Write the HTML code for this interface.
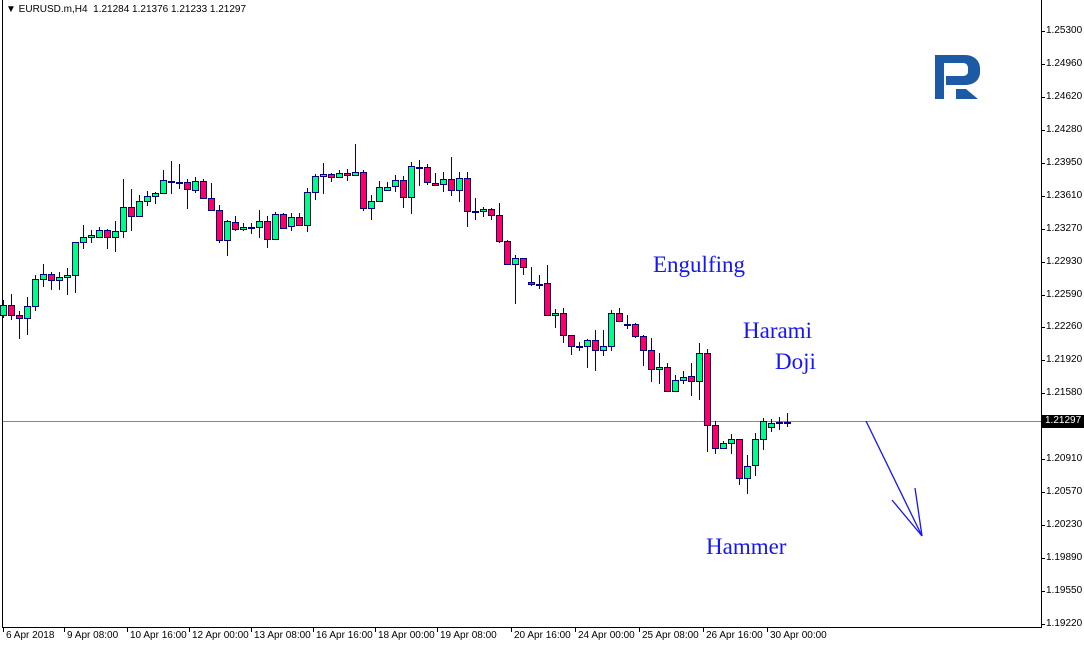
<!DOCTYPE html>
<html><head><meta charset="utf-8"><style>
html,body{margin:0;padding:0;background:#fff;}
body{width:1084px;height:648px;position:relative;overflow:hidden;font-family:"Liberation Sans",sans-serif;}
.t{position:absolute;font-size:10px;color:#000;white-space:nowrap;line-height:12px;}
.a{position:absolute;font-family:"Liberation Serif",serif;font-size:23px;color:#1414ff;white-space:nowrap;line-height:26px;}
</style></head><body>
<svg id="s" width="1084" height="648" style="position:absolute;left:0;top:0" shape-rendering="crispEdges">
<line x1="2.5" y1="0" x2="2.5" y2="627" stroke="#000"/>
<line x1="1041.5" y1="0" x2="1041.5" y2="627" stroke="#000"/>
<line x1="2" y1="627.5" x2="1042" y2="627.5" stroke="#000"/>
<line x1="3" y1="421.5" x2="1041" y2="421.5" stroke="#888"/>
<g id="c"></g>
<g id="ticks"></g>
<path d="M935 99V55h30c9 0 15 6 15 13v4c0 8-6 13-15 13h-19v-9h17c3 0 5-2 5-4v-4c0-3-2-5-5-5h-19v36z M956 89h10l12 10h-22z" fill="#1d5aa6" shape-rendering="auto"/>
<g stroke="#1414ff" stroke-width="1.3" fill="none" shape-rendering="auto">
<line x1="866" y1="421" x2="922" y2="536"/>
<line x1="922" y1="536" x2="892" y2="500"/>
<line x1="922" y1="536" x2="915" y2="488"/>
</g>
<rect x="1042" y="415" width="42" height="13" fill="#000"/>
</svg>
<div class="t" style="left:6px;top:4px;">&#9660; EURUSD.m,H4&nbsp; 1.21284 1.21376 1.21233 1.21297</div>
<div class="t" style="left:1045px;top:415px;color:#fff;">1.21297</div>
<div id="lbl"></div>
<div class="a" style="left:653px;top:252px;">Engulfing</div>
<div class="a" style="left:743px;top:318px;">Harami</div>
<div class="a" style="left:775px;top:349px;">Doji</div>
<div class="a" style="left:706px;top:534px;">Hammer</div>
<script>
var d=[[3,305,315,300,318],[11,315,305,294,320],[19,318,315,311,339],[27,306,318,297,335],[35,279,306,275,311],[43,274,279,264,287],[51,280,274,272,290],[59,277,280,272,290],[67,275,277,268,295],[75,242,275,242,293],[83,237,242,225,249],[91,235,237,230,243],[99,230,237,227,238],[107,237,230,229,249],[115,231,237,221,252],[123,207,231,179,238],[131,216,207,189,231],[139,201,216,195,216],[147,196,201,191,206],[155,193,196,192,204],[163,180,193,170,194],[171,181,181,161,194],[179,182,182,164,189],[187,189,182,179,209],[195,181,190,177,193],[203,198,181,179,199],[211,210,198,183,211],[219,240,210,205,243],[227,221,240,220,256],[235,229,222,216,231],[243,227,229,223,231],[251,227,227,223,234],[259,221,227,210,238],[267,239,221,216,248],[275,214,239,212,239],[283,228,214,213,228],[291,217,226,213,231],[299,225,217,213,225],[307,192,225,188,232],[315,176,192,174,200],[323,174,176,163,194],[331,177,174,173,182],[339,173,177,170,178],[347,175,173,169,181],[355,172,175,144,175],[363,208,172,170,211],[371,201,208,195,220],[379,187,201,181,202],[387,187,190,182,190],[395,180,186,175,192],[403,197,180,176,208],[411,166,197,162,214],[419,167,167,160,186],[427,182,167,164,185],[435,185,183,173,186],[443,179,184,172,192],[451,190,179,157,196],[459,178,190,172,202],[467,211,178,172,227],[475,211,211,198,220],[483,209,211,207,217],[491,215,209,208,220],[499,241,215,203,243],[507,264,241,240,265],[515,258,264,255,304],[523,267,258,258,275],[531,284,282,267,286],[539,284,284,275,289],[547,315,283,265,316],[555,313,315,309,328],[563,335,313,308,343],[571,346,335,335,355],[579,346,346,342,351],[587,340,346,339,368],[595,350,340,330,371],[603,346,350,330,356],[611,313,346,310,351],[619,321,313,308,322],[627,324,324,315,329],[635,336,324,323,338],[643,350,336,335,366],[651,369,350,338,382],[659,367,369,353,384],[667,391,367,363,392],[675,380,391,375,392],[683,377,380,371,384],[691,381,376,363,396],[699,353,381,343,400],[707,425,353,349,452],[715,448,425,421,454],[723,443,448,441,449],[731,439,443,434,454],[739,478,439,439,485],[747,466,478,455,494],[755,439,465,433,476],[763,421,439,418,450],[771,423,427,419,432],[779,422,422,417,430],[787,422,422,413,427]];
var h='';d.forEach(function(c){var x=c[0],o=c[1],cl=c[2],hi=c[3],lo=c[4];
h+='<line x1="'+(x+.5)+'" y1="'+hi+'" x2="'+(x+.5)+'" y2="'+lo+'" stroke="#000080"/>';
var t=Math.min(o,cl),b=Math.max(o,cl);
if(b-t<1){h+='<rect x="'+(x-3)+'" y="'+t+'" width="7" height="2" fill="#000080"/>';}
else{var col=cl<o?'#ff0060':'#00ff80';h+='<rect x="'+(x-2.5)+'" y="'+(t+.5)+'" width="6" height="'+(b-t)+'" fill="'+col+'" stroke="#000080"/>';}});
document.getElementById('c').innerHTML=h;
var p=['1.25300','1.24960','1.24620','1.24280','1.23950','1.23610','1.23270','1.22930','1.22590','1.22260','1.21920','1.21580','1.21240','1.20910','1.20570','1.20230','1.19890','1.19550','1.19220'];
var L='',T='';p.forEach(function(v,i){var y=Math.round(31+i*32.94);if(i!=12)L+='<div class="t" style="left:1046px;top:'+(y-6)+'px">'+v+'</div>';T+='<line x1="1042" y1="'+(y+.5)+'" x2="1045" y2="'+(y+.5)+'" stroke="#000"/>';});
var tl=[[3,'6 Apr 2018'],[64,'9 Apr 08:00'],[127,'10 Apr 16:00'],[189,'12 Apr 00:00'],[251,'13 Apr 08:00'],[313,'16 Apr 16:00'],[375,'18 Apr 00:00'],[437,'19 Apr 08:00'],[511,'20 Apr 16:00'],[575,'24 Apr 00:00'],[639,'25 Apr 08:00'],[703,'26 Apr 16:00'],[767,'30 Apr 00:00']];
tl.forEach(function(a){L+='<div class="t" style="left:'+(a[0]+3)+'px;top:630px">'+a[1]+'</div>';T+='<line x1="'+(a[0]+.5)+'" y1="628" x2="'+(a[0]+.5)+'" y2="632" stroke="#000"/>';});
document.getElementById('lbl').innerHTML=L;document.getElementById('ticks').innerHTML=T;
</script>
</body></html>
